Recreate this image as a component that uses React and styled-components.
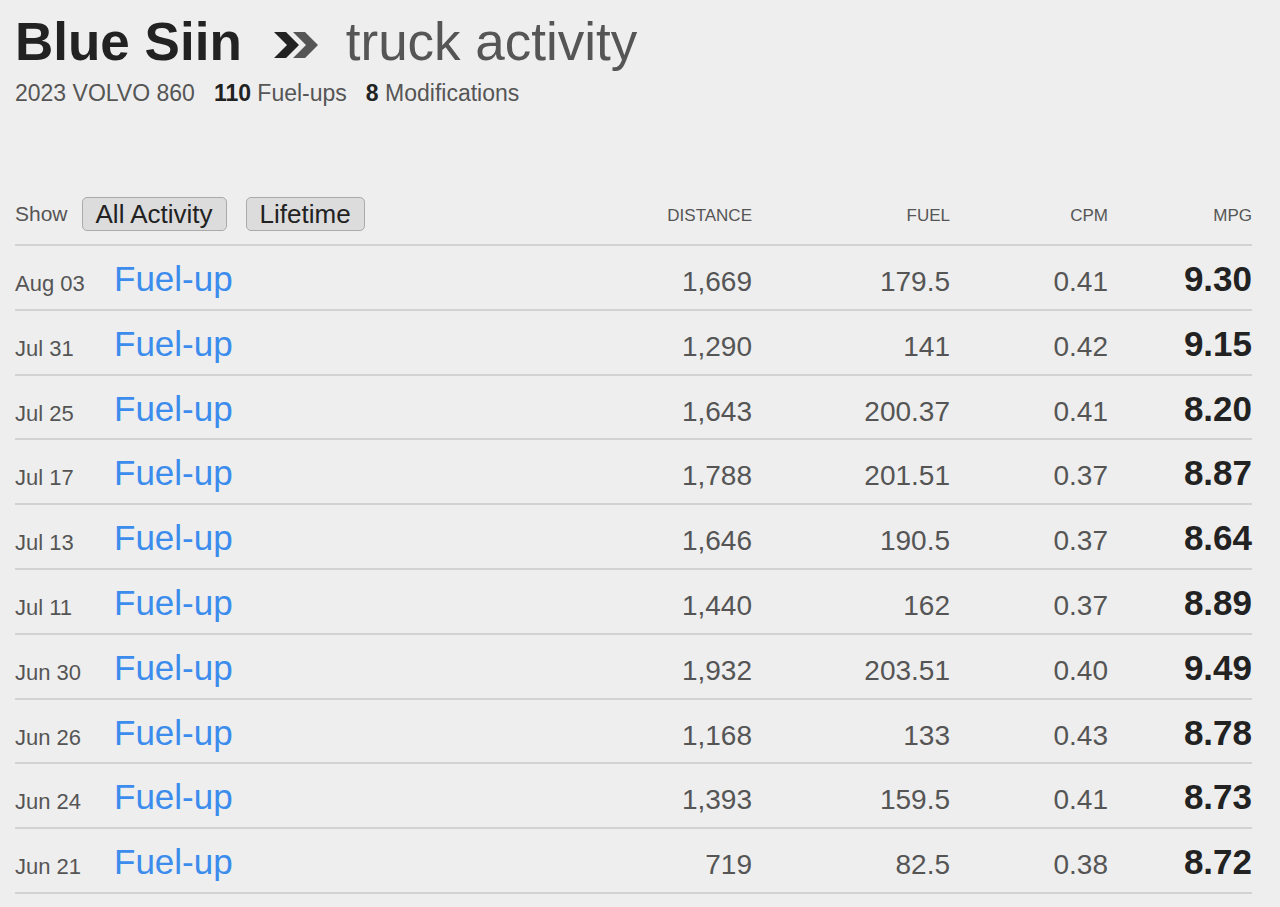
import styled, { createGlobalStyle } from "styled-components";

const GlobalStyle = createGlobalStyle`
  html, body {
    margin: 0;
    padding: 0;
    background: #eeeeee;
    font-family: "Liberation Sans", Arial, Helvetica, sans-serif;
  }
`;

const Page = styled.div`
  padding: 15px 28px 0 15px;
  min-height: 892px;
`;

const Title = styled.h1`
  display: flex;
  align-items: center;
  margin: 0;
  font-size: 53px;
  line-height: 53px;
  font-weight: 400;
  color: #555;
`;

const Name = styled.span`
  font-weight: 700;
  color: #222;
`;

const Chevrons = styled.svg`
  margin: 6px 28px 0 32px;
`;

const Subtitle = styled.div`
  margin-top: 14px;
  font-size: 23px;
  line-height: 23px;
  color: #555;

  b {
    color: #222;
    margin-left: 19px;
  }
`;

const Toolbar = styled.div`
  display: grid;
  grid-template-columns: 99px 1fr 200px 198px 158px 144px;
  align-items: center;
  margin-top: 90px;
  padding-bottom: 13px;
  border-bottom: 2px solid #d2d2d2;
`;

const ShowGroup = styled.div`
  grid-column: 1 / 3;
  display: flex;
  align-items: center;
  gap: 14px;
  font-size: 21px;
  color: #555;
  padding-top: 2px;
`;

const Button = styled.button`
  height: 34px;
  padding: 0 13px;
  margin-right: 5px;
  border: 1px solid #aaa;
  border-radius: 5px;
  background: #dcdcdc;
  font-family: inherit;
  font-size: 26px;
  line-height: 32px;
  color: #222;
`;

const ColHead = styled.div`
  text-align: right;
  font-size: 17px;
  color: #555;
  padding-top: 6px;
`;

const Row = styled.div`
  display: grid;
  grid-template-columns: 99px 1fr 200px 198px 158px 144px;
  align-items: baseline;
  height: 47.8px;
  padding-top: 15px;
  border-bottom: 2px solid #d2d2d2;
  line-height: 1;
`;

const Date = styled.div`
  font-size: 22px;
  color: #555;
`;

const Kind = styled.a`
  font-size: 35px;
  color: #3b8ced;
  text-decoration: none;
`;

const Num = styled.div`
  text-align: right;
  font-size: ${(p) => (p.$big ? "35px" : "28px")};
  font-weight: ${(p) => (p.$big ? 700 : 400)};
  color: ${(p) => (p.$big ? "#222" : "#555")};
`;

const rows = [
  ["Aug 03", "1,669", "179.5", "0.41", "9.30"],
  ["Jul 31", "1,290", "141", "0.42", "9.15"],
  ["Jul 25", "1,643", "200.37", "0.41", "8.20"],
  ["Jul 17", "1,788", "201.51", "0.37", "8.87"],
  ["Jul 13", "1,646", "190.5", "0.37", "8.64"],
  ["Jul 11", "1,440", "162", "0.37", "8.89"],
  ["Jun 30", "1,932", "203.51", "0.40", "9.49"],
  ["Jun 26", "1,168", "133", "0.43", "8.78"],
  ["Jun 24", "1,393", "159.5", "0.41", "8.73"],
  ["Jun 21", "719", "82.5", "0.38", "8.72"],
];

function App() {
  return (
    <>
      <GlobalStyle />
      <Page>
        <Title>
          <Name>Blue Siin</Name>
          <Chevrons width="44" height="26" viewBox="0 0 44 26">
            <polygon points="0,0 12,0 25,13 12,26 0,26 13,13" fill="#222" />
            <polygon points="19,0 31,0 44,13 31,26 19,26 32,13" fill="#555" />
          </Chevrons>
          <span>truck activity</span>
        </Title>
        <Subtitle>
          2023 VOLVO 860<b>110</b> Fuel-ups<b>8</b> Modifications
        </Subtitle>

        <Toolbar>
          <ShowGroup>
            Show
            <Button>All Activity</Button>
            <Button>Lifetime</Button>
          </ShowGroup>
          <ColHead>DISTANCE</ColHead>
          <ColHead>FUEL</ColHead>
          <ColHead>CPM</ColHead>
          <ColHead>MPG</ColHead>
        </Toolbar>

        {rows.map((r, i) => (
          <Row key={i}>
            <Date>{r[0]}</Date>
            <Kind href="#">Fuel-up</Kind>
            <Num>{r[1]}</Num>
            <Num>{r[2]}</Num>
            <Num>{r[3]}</Num>
            <Num $big>{r[4]}</Num>
          </Row>
        ))}
      </Page>
    </>
  );
}

export default App;
